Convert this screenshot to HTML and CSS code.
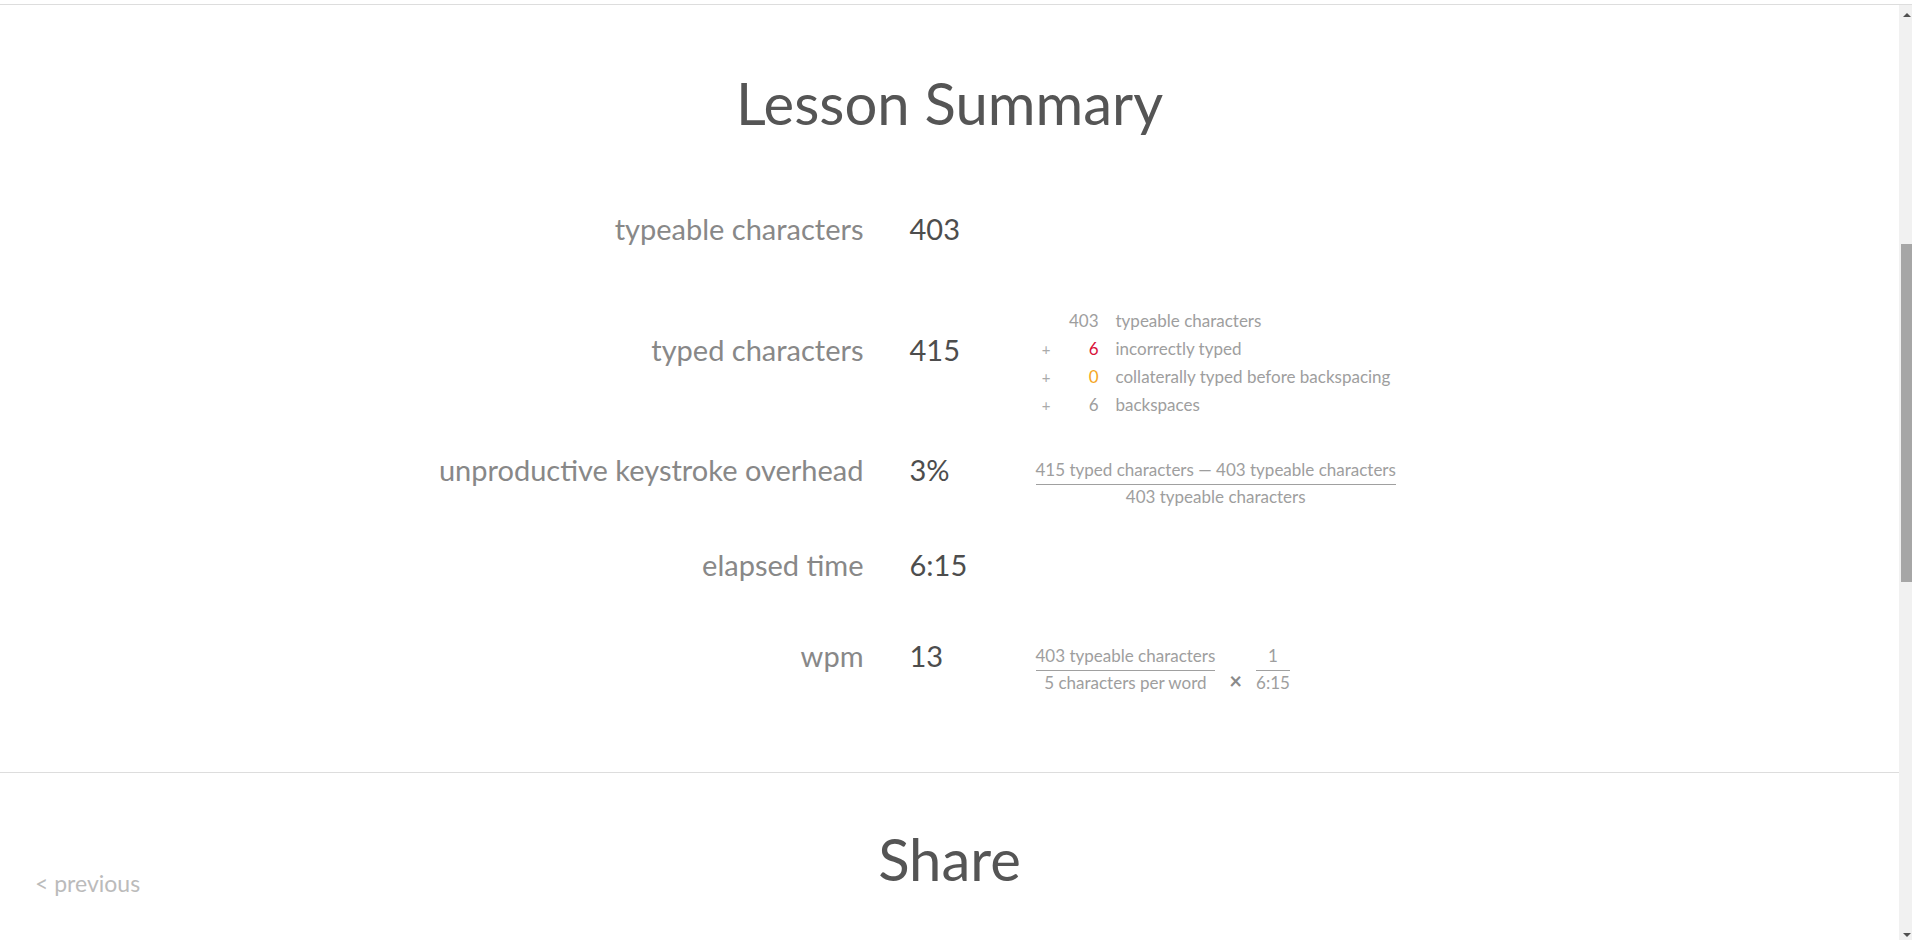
FILE: index.html
```html
<!DOCTYPE html>
<html lang="en">
<head>
<meta charset="utf-8">
<title>Lesson Summary</title>
<link rel="stylesheet" href="styles.css">
</head>
<body>
<div class="frame-top"></div>
<div class="viewport">
  <main class="page">
    <section class="summary">
      <h1 class="section-title">Lesson Summary</h1>
      <div class="stats">
        <div class="stat">
          <div class="stat-label">typeable characters</div>
          <div class="stat-value">403</div>
          <div class="stat-detail"></div>
        </div>
        <div class="stat">
          <div class="stat-label">typed characters</div>
          <div class="stat-value">415</div>
          <div class="stat-detail">
            <div class="breakdown">
              <span class="op"></span><span class="num">403</span><span class="txt">typeable characters</span>
              <span class="op">+</span><span class="num num-error">6</span><span class="txt">incorrectly typed</span>
              <span class="op">+</span><span class="num num-collateral">0</span><span class="txt">collaterally typed before backspacing</span>
              <span class="op">+</span><span class="num">6</span><span class="txt">backspaces</span>
            </div>
          </div>
        </div>
        <div class="stat stat-formula">
          <div class="stat-label">unproductive keystroke overhead</div>
          <div class="stat-value">3%</div>
          <div class="stat-detail"><span class="fraction"><span class="numerator">415 typed characters — 403 typeable characters</span><span class="denominator">403 typeable characters</span></span></div>
        </div>
        <div class="stat">
          <div class="stat-label">elapsed time</div>
          <div class="stat-value">6:15</div>
          <div class="stat-detail"></div>
        </div>
        <div class="stat stat-formula">
          <div class="stat-label">wpm</div>
          <div class="stat-value">13</div>
          <div class="stat-detail"><span class="fraction"><span class="numerator">403 typeable characters</span><span class="denominator">5 characters per word</span></span><span class="times">×</span><span class="fraction"><span class="numerator">1</span><span class="denominator">6:15</span></span></div>
        </div>
      </div>
    </section>
    <section class="share">
      <div class="share-nav"><a class="prev-link" href="#">&lt; previous</a></div>
      <h1 class="section-title">Share</h1>
      <div class="share-side"></div>
    </section>
  </main>
  <div class="scrollbar">
    <div class="sb-arrow sb-arrow-up"><span class="tri-up"></span></div>
    <div class="sb-track"><div class="sb-thumb"></div></div>
    <div class="sb-arrow sb-arrow-down"><span class="tri-down"></span></div>
  </div>
</div>
</body>
</html>
```

FILE: styles.css
```css
* { box-sizing: border-box; }

html, body {
  margin: 0;
  padding: 0;
  height: 100%;
  overflow: hidden;
  background: #ffffff;
}

body {
  font-family: Lato, "Open Sans", "Noto Sans", sans-serif;
  color: #555555;
}

.frame-top {
  height: 5px;
  border-bottom: 1px solid #dddddd;
}

.viewport {
  display: flex;
  height: 935px;
}

.page {
  flex: 1;
  overflow: hidden;
}

.section-title {
  margin: 0;
  font-size: 58px;
  line-height: 72px;
  font-weight: 400;
  color: #555555;
  text-align: center;
}

.summary {
  padding: 62px 0 72px;
  border-bottom: 1px solid #dddddd;
}

.stats {
  display: flex;
  flex-direction: column;
  gap: 33px;
  margin-top: 72px;
}

.stat {
  display: grid;
  grid-template-columns: 1fr 80px 1fr;
  column-gap: 46px;
  align-items: center;
  min-height: 58px;
}

.stat-formula {
  margin-bottom: 4px;
}

.stat-label,
.stat-value {
  font-size: 29px;
  line-height: 36px;
  padding-bottom: 22px;
}

.stat-label {
  text-align: right;
  color: #888888;
}

.stat-value {
  color: #4d4d4d;
}

.stat-detail {
  padding-top: 5px;
  font-size: 17px;
  line-height: 24px;
  color: #9e9e9e;
}

.breakdown {
  display: grid;
  grid-template-columns: 21px 42px auto;
  justify-content: start;
  line-height: 28px;
}

.breakdown .op {
  text-align: center;
  color: #aaaaaa;
  font-size: 15px;
}

.breakdown .num {
  text-align: right;
}

.breakdown .txt {
  padding-left: 17px;
}

.num-error { color: #d8123a; }
.num-collateral { color: #f5a623; }

.fraction {
  display: inline-block;
  vertical-align: baseline;
  text-align: center;
}

.numerator {
  display: block;
  padding-bottom: 2px;
  border-bottom: 1px solid #a0a0a0;
}

.denominator {
  display: block;
}

.times {
  margin: 0 14px;
  font-size: 22px;
  font-weight: 700;
  color: #8a8a8a;
}

.share {
  display: grid;
  grid-template-columns: 1fr auto 1fr;
  align-items: start;
  padding-top: 50px;
}

.share-nav {
  padding-left: 35px;
  margin-top: 46px;
  font-size: 23px;
  line-height: 28px;
}

.prev-link {
  color: #bbbbbb;
  text-decoration: none;
}

.scrollbar {
  width: 13px;
  background: #f1f1f1;
  display: flex;
  flex-direction: column;
}

.sb-arrow {
  height: 17px;
  display: flex;
  padding-left: 4px;
}

.sb-arrow-up { align-items: flex-start; padding-top: 8px; }
.sb-arrow-down { align-items: flex-end; padding-bottom: 3px; }

.tri-up {
  width: 0;
  height: 0;
  border-left: 4px solid transparent;
  border-right: 4px solid transparent;
  border-bottom: 4px solid #505050;
}

.tri-down {
  width: 0;
  height: 0;
  border-left: 4px solid transparent;
  border-right: 4px solid transparent;
  border-top: 4px solid #505050;
}

.sb-track {
  flex: 1;
  padding-top: 222px;
}

.sb-thumb {
  margin-left: 2px;
  width: 11px;
  height: 338px;
  background: #a6a6a6;
}
```
